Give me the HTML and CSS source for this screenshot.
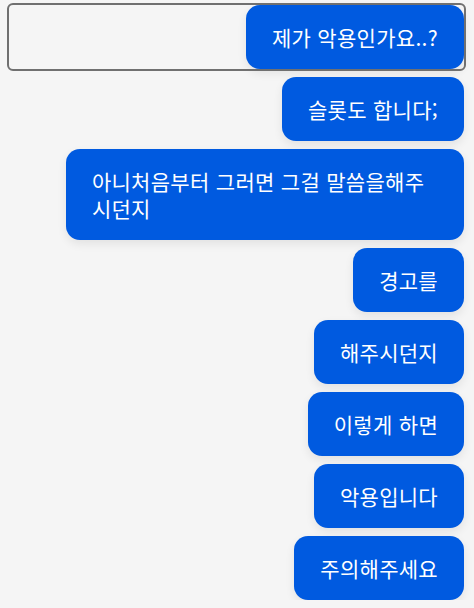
FILE: index.html
```html
<!DOCTYPE html>
<html lang="ko">
<head>
    <meta charset="UTF-8">
    <meta name="viewport" content="width=device-width, initial-scale=1.0">
    <title>채팅</title>
    <link rel="stylesheet" href="styles.css">
</head>
<body>
    <div class="chat">
        <!-- first message is the one with keyboard focus -->
        <div class="row focused" tabindex="0">
            <div class="bubble">제가 악용인가요..?</div>
        </div>
        <div class="row"><div class="bubble">슬롯도 합니다;</div></div>
        <div class="row"><div class="bubble">아니처음부터 그러면 그걸 말씀을해주시던지</div></div>
        <div class="row"><div class="bubble">경고를</div></div>
        <div class="row"><div class="bubble">해주시던지</div></div>
        <div class="row"><div class="bubble">이렇게 하면</div></div>
        <div class="row"><div class="bubble">악용입니다</div></div>
        <div class="row"><div class="bubble">주의해주세요</div></div>
    </div>
</body>
</html>
```

FILE: styles.css
```css
body {
    margin: 0;
    background-color: #f5f5f5;
    font-family: "Noto Sans CJK KR", "Noto Sans", sans-serif;
}
.chat {
    display: flex;
    flex-direction: column;
    gap: 8px;
    padding: 5px 10px 0 9px;
}
.row {
    display: flex;
    justify-content: flex-end;
}
.row.focused {
    outline: 2px solid #707070;
    border-radius: 4px;
}
.bubble {
    box-sizing: border-box;
    max-width: 87.5%;
    padding: 18.5px 26px;
    background-color: #005ae0;
    color: white;
    font-size: 21px;
    line-height: 27px;
    letter-spacing: 0.3px;
    border-radius: 14px;
    box-shadow: 0 4px 10px rgba(0, 0, 0, 0.08);
}
```
